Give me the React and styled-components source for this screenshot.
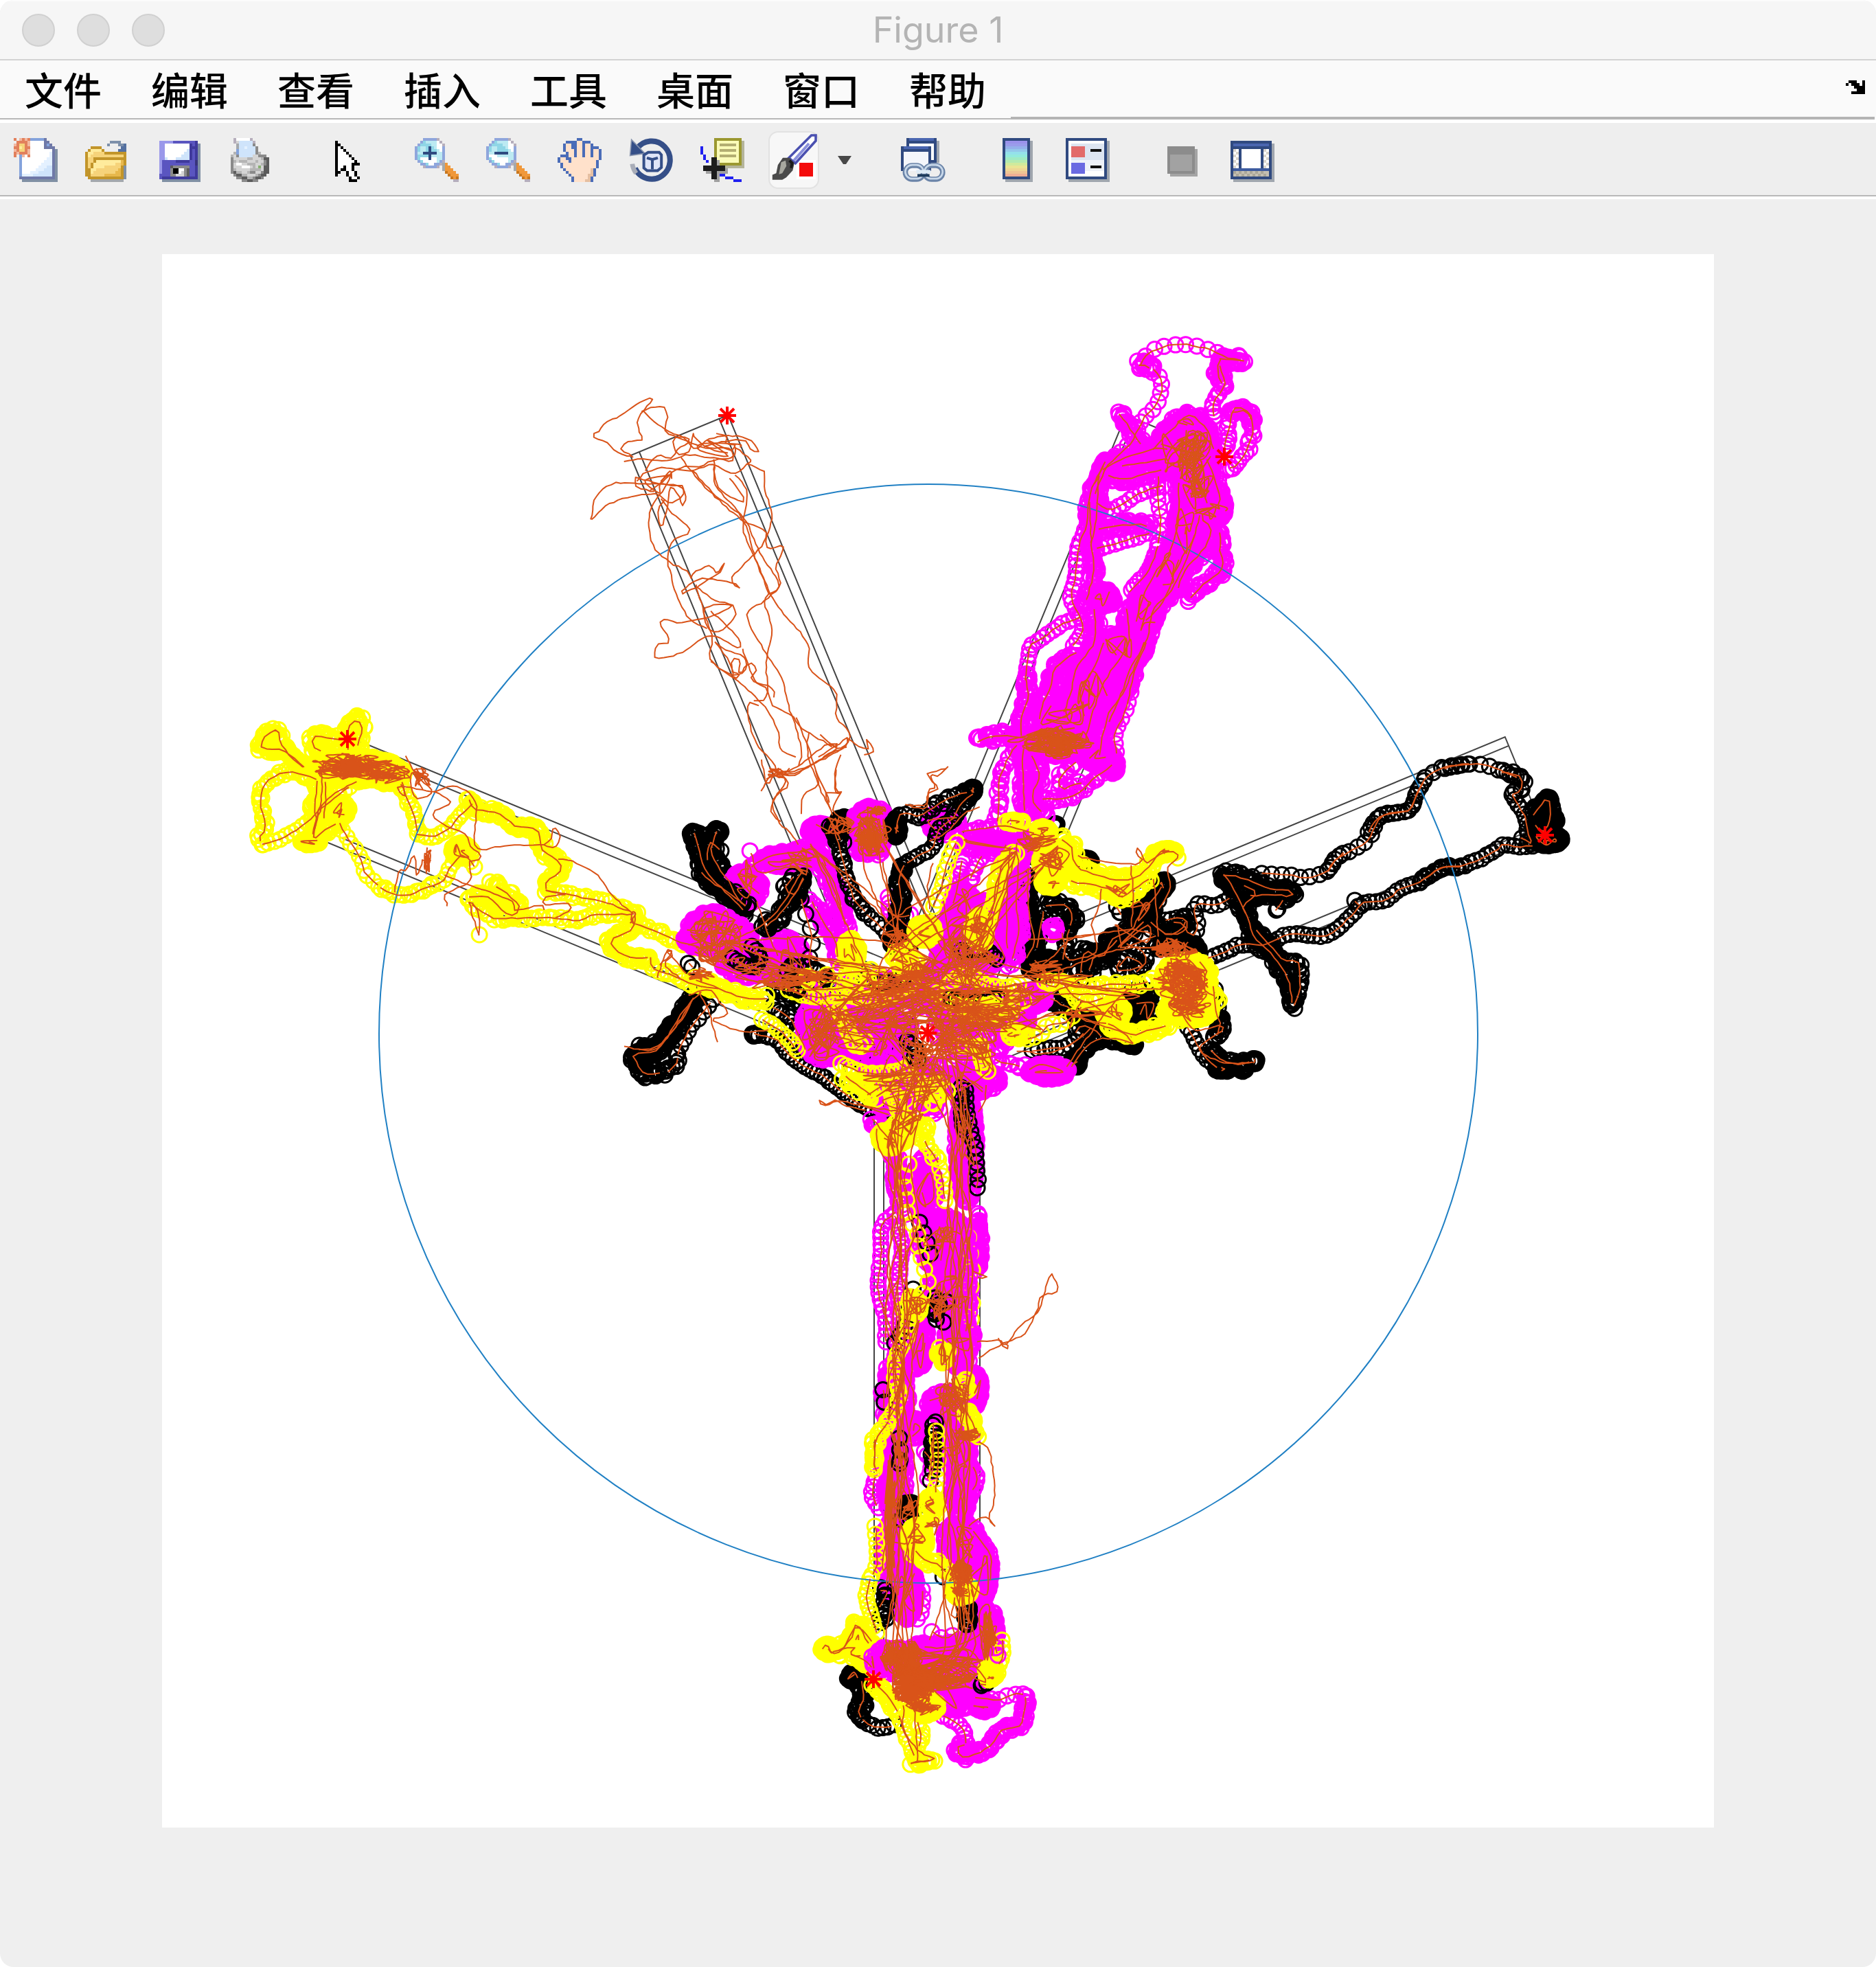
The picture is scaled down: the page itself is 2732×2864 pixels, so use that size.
import React from "react";
import styled, { createGlobalStyle } from "styled-components";

const GlobalStyle = createGlobalStyle`
  * { box-sizing: border-box; }
  html, body { margin: 0; background: #ffffff; }
  button { border: 0; padding: 0; margin: 0; background: none; font: inherit; color: inherit; }
`;

/* ---------- window chrome ---------- */

const Window = styled.div`
  display: flex;
  flex-direction: column;
  min-height: 100vh;
  overflow: hidden;
  border-radius: 20px;
  background: #efefef;
  font-family: "Inter", "Noto Sans CJK SC", sans-serif;
`;

const TitleBar = styled.header`
  display: grid;
  grid-template-columns: 1fr auto 1fr;
  align-items: center;
  height: 88px;
  padding: 0 32px;
  background: #f6f6f6;
  border-top: 2px solid #fcfcfc;
  border-bottom: 2px solid #d3d3d3;
`;

const Lights = styled.div`
  display: flex;
  gap: 32px;
`;

const Light = styled.button`
  width: 48px;
  height: 48px;
  border: 2px solid #d0d0d0;
  border-radius: 50%;
  background: #dedede;
`;

const Title = styled.h1`
  margin: 0;
  color: #b4b4b4;
  font-size: 52px;
  font-weight: 400;
  line-height: 60px;
`;

const MenuBar = styled.nav`
  display: flex;
  height: 86px;
  background: #fafafa;
`;

const Menus = styled.div`
  display: flex;
  border-bottom: 2px solid #b8b8b8;
`;

const MenuButton = styled.button`
  width: 184px;
  padding-bottom: 2px;
  color: #000000;
  font-family: "Noto Sans CJK SC", sans-serif;
  font-size: 56px;
  font-weight: 500;
  line-height: 80px;
`;

const MenuRest = styled.div`
  display: flex;
  flex: 1;
  align-items: center;
  justify-content: flex-end;
  margin-right: 2px;
  padding-right: 14px;
  border-bottom: 4px solid #b4b4b4;
`;

const ToolBar = styled.div`
  display: flex;
  align-items: center;
  gap: 72px;
  height: 116px;
  padding-left: 20px;
  background: #eeeeee;
  border-top: 5px solid #ffffff;
  border-bottom: 4px solid #ffffff;
  box-shadow: inset 0 -2px 0 #b8b8b8;
`;

const ToolGroup = styled.div`
  display: flex;
  align-items: center;
  gap: 40px;
`;

const ToolButton = styled.button`
  display: flex;
  align-items: center;
  justify-content: center;
  width: ${(p) => (p.$on ? 74 : 64)}px;
  height: ${(p) => (p.$on ? 84 : 64)}px;
  margin: ${(p) => (p.$on ? "0 -5px" : "0")};
  border: ${(p) => (p.$on ? "2px solid #e2e2e2" : "0")};
  border-radius: ${(p) => (p.$on ? 14 : 0)}px;
  background: ${(p) => (p.$on ? "#f7f7f7" : "transparent")};
`;

const BrushTool = styled.div`
  display: flex;
  align-items: center;
  gap: 32px;
`;

const DropButton = styled.button`
  display: flex;
  width: 20px;
  justify-content: center;
`;

const Canvas = styled.main`
  flex: 1;
  padding: 80px 236px 202px;
`;

const Plot = styled.svg`
  display: block;
  width: 100%;
  height: auto;
  background: #ffffff;
`;

/* ---------- toolbar icons on a 16 x 16 grid ---------- */

const PALETTE = {
  k: "#000000", w: "#ffffff", l: "#e4f1ff", L: "#cfe4fb", b: "#84a3dc", n: "#6f79a8", g: "#8090a4",
  o: "#e2805c", p: "#f2b8a0", y: "#f6d37a", Y: "#ffeb9c", d: "#c2952a", D: "#e8b84c", a: "#7d90aa",
  A: "#5470a0", s: "#a4a8ac", v: "#5a55c0", V: "#9a98ea", u: "#3f3a9c", U: "#38347c", h: "#4a6cb8",
  f: "#ffe1cb", F: "#e5bfa2", c: "#8fa6dc", C: "#bceaf2", e: "#8fd6e6", m: "#2f4a80", r: "#f0983a",
  R: "#c87820", t: "#b6aebc", x: "#8a8a8a", X: "#5c5c5c", z: "#d4d4d4", q: "#b4b4b4", G: "#86b070",
};

const LENS = (plus) => [
  "...ccccct.......",
  "..ceCCCCwt......",
  ".ceeeeCCwwt.....",
  plus ? "ceCCemeCwwc....." : "ceCCeeeCwwc.....",
  plus ? "ceCCemeeCwc....." : "ceCCeeeeCwc.....",
  "cCCmmmmmCCc.....",
  plus ? "ceeeemCCCCc....." : "cwwwCCCCCCc.....",
  plus ? "cewwwmwwCCc....." : "cewwwwwwCCc.....",
  ".cewwwwwCct.....",
  "..ccewwcctsr....",
  "...tcccct.srr...",
  "..........srrr..",
  "...........Rrrr.",
  "............Rrrr",
  ".............RrR",
  "..............tt",
];

const PIXELS = {
  newFigure: [
    "o.popobbbbbn....", ".oooopwwwwwnn...", "poyyopwwwwwnbn..", "ooYyoowwwwwnnnn.",
    "poyyopwwwwwwwwng", "opooopwwwwwwwlng", "o.bpwowwwwwwwlng", "..bwwwwwwwwwllng",
    "..bwwwwwwwwlllng", "..bwwwwwwwllllng", "..bwwwwwwlllLLng", "..bwwwwwlllLLLng",
    "..bwwwlllLLLLLng", "..bllllLLLLLLLng", "..nnnnnnnnnnnnng", "...ggggggggggggg",
  ],
  open: [
    "................", ".........aaaa...", "........a...aaA.", "..dddd.......AA.",
    ".dYYYYd.....AAA.", "dYYyyyydddddddd.", "dYyyyyyyyyyyyyd.", "dyydddddddddddd.",
    "dyydYYYYYYYYYDd.", "dydYYYYYYYYyyDd.", "dydYYYYyyyyyydg.", "ddYYyyyyyyyyDdg.",
    "ddYyyyyyyyyDDdg.", "ddyyyyyDDDDDDdg.", ".dddddddddddddg.", "..ssssssssssss..",
  ],
  save: [
    "................", ".VVVVVvvvvvvvvu.", ".VVwwwwwwwwwuvug", ".VVwwwwwwwwwuuug",
    ".VVwwwwwwwwLuvug", ".VVwwwwwwwLLuvug", ".VVwwwwwwLLLuvug", ".VVLwwwLLLLLuvug",
    ".VvvvvvuuuuuvvUg", ".VvvvvvvvvvvvvUg", ".VvvvXxxxxxxvvug", ".VvvvxkkwwxXvvug",
    ".VvvvxkkwzxXvvug", ".vvvvxxzzzxXvvug", ".vuuuuuuuuuuuuug", "..gggggggggggggg",
  ],
  print: [
    "..twwwwwt.......", "..tzLLLLLt......", "...sLLLLLx......", "...sLLlLLLx.....",
    "...bLLLLLLx.....", "..qbLLLLLLxq....", ".qzxLLLLLzzxxx..", ".xzzzzzqqzzzqXX.",
    ".xqzqqqzzzqzzxX.", ".xzwwzzqqqzzqxX.", ".xzzzwwwzqzGzXX.", ".xqzzzzzqqqqzXX.",
    ".xXqqzzqxxzzxXX.", "..xXXqqzzzqxXX..", "...xxXXqqxXXx...", ".....xxXXxx.....",
  ],
  pointer: [
    "................", ".....k..........", ".....kk.........", ".....kwk........",
    ".....kwwk.......", ".....kwwwk......", ".....kwwwwk.....", ".....kwwwwwk....",
    ".....kwwwwwwk...", ".....kwwwwwkkk..", ".....kwwkwwk....", ".....kwkkwwk....",
    ".....kk..kwwk...", ".....k...kwwk...", "..........kwwk..", "..........kkk...",
  ],
  zoomIn: LENS(true),
  zoomOut: LENS(false),
  pan: [
    ".......hh.......", "...hhhhffhhh....", "..hffhhffhffh...", "..hffhhffhffhhh.",
    "..hfffhffhffhffh", "...hffhffhffhffh", ".hhhffhffhffhffh", "hffhhffffffffffh",
    "hfffhfffffffffh.", ".hffffffffffffh.", ".hffffffffffffh.", "..hfffffffffFh..",
    "...hffffffffFh..", "....hffffffFFh..", ".....hfffffFh...", ".....hffffFFh...",
  ],
  undock: [".kkk..k", "k.kkk.k", "...kkkk", "....kkk", "..kkkkk"],
};

function PixelIcon({ name }) {
  const rows = PIXELS[name];
  const w = rows[0].length;
  const cells = [];
  rows.forEach((row, y) => {
    for (let x = 0; x < row.length; ) {
      let e = x + 1;
      while (e < row.length && row[e] === row[x]) e++;
      const fill = PALETTE[row[x]];
      if (fill) cells.push(<rect key={`${x}-${y}`} x={x} y={y} width={e - x} height="1" fill={fill} />);
      x = e;
    }
  });
  return (
    <svg width={w * 4} height={rows.length * 4} viewBox={`0 0 ${w} ${rows.length}`} shapeRendering="crispEdges" aria-hidden="true">
      {cells}
    </svg>
  );
}

/* each row: x, y, width, height, fill */
function RectIcon({ rects, children }) {
  return (
    <svg width="64" height="64" viewBox="0 0 16 16" overflow="visible" aria-hidden="true">
      {rects.map(([x, y, w, h, fill], i) => (
        <rect key={i} x={x} y={y} width={w} height={h} fill={fill} shapeRendering="crispEdges" />
      ))}
      {children}
    </svg>
  );
}

const RotateIcon = () => (
  <RectIcon rects={[]}>
    <path d="M2.8 4A6.7 6.9 0 1 1 2.2 11" fill="none" stroke="#354f88" strokeWidth="2" />
    <path d="M1.2 9.4a7 7 0 0 0 1.4 3.4" fill="none" stroke="#a9adb8" strokeWidth="1.7" />
    <path d="M.9 .6L5.8 5.6L.4 6.4z" fill="#354f88" stroke="#8793ad" strokeWidth=".4" />
    <path d="M5.4 6.2L7 5.2h4l.8.9v4.6l-1.4 1.2H6.6l-1.2-1z" fill="#dfe5f8" stroke="#354f88" strokeWidth="1" />
    <path d="M6.5 7.2l2 .6 2-.6M8.5 7.8v3.6" fill="none" stroke="#354f88" strokeWidth="1" />
  </RectIcon>
);

const TIP = [
  [6, 1, 10, 10, "#b4b49a"], [5, 0, 10, 10, "#9b9830"], [6, 1, 8, 8, "#fafbb8"],
  [7, 2, 6, 1, "#b3ae72"], [7, 4, 6, 1, "#b3ae72"], [7, 6, 6, 1, "#b3ae72"],
  [5, 8, 2, 8, "#a0a0a0"], [2, 11, 8, 2, "#a0a0a0"],
  [4, 7, 2, 8, "#1c1c1c"], [1, 10, 8, 2, "#1c1c1c"],
  [0, 3, 1, 3, "#2020f0"], [1, 6, 1, 2, "#2020f0"], [2, 8, 1, 1, "#2020f0"],
  [7, 13, 2, 1, "#2020f0"], [9, 14, 3, 1, "#2020f0"], [12, 15, 3, 1, "#2020f0"],
];

const BrushIcon = () => (
  <RectIcon rects={[[9, 8, 7, 7, "#ffffff"], [10, 9, 5, 5, "#f40c0c"]]}>
    <path d="M14.4-1H16V1L8.6 9.2L6.2 7.2z" fill="#ffffff" stroke="#4a50b0" strokeWidth=".9" />
    <path d="M13.5 2L8 8.2" stroke="#8a90dc" strokeWidth="1" />
    <path d="M4 7.2h2.4l1.8 2-.6 2.6-2.4 2.6-1.4.8H.2v-1.8l1.4-.6.6-3z" fill="#4a4a4a" />
    <path d="M3.4 8.8l1.6-.6.3 2-1.5 2.6-1.2.4z" fill="#a8a8a0" />
    <path d="M6.4 8.2l1 .9-.4 1.8" fill="none" stroke="#1c1c1c" strokeWidth="1" />
  </RectIcon>
);

const LinkIcon = () => (
  <RectIcon
    rects={[
      [3, 1, 11, 8, "#a0a6ae"], [2, 0, 11, 9, "#304a80"], [3, 0, 9, 1, "#4a66b0"], [3, 2, 9, 6, "#ffffff"],
      [0, 3, 11, 9, "#304a80"], [1, 3, 9, 1, "#4a66b0"], [1, 5, 9, 7, "#f4f6fb"],
    ]}
  >
    <rect x="1.6" y="10" width="6.6" height="5" rx="2.5" fill="none" stroke="#6b84a8" strokeWidth="1.9" />
    <rect x="8.6" y="10" width="6.6" height="5" rx="2.5" fill="none" stroke="#6b84a8" strokeWidth="1.9" />
    <rect x="1.6" y="9.8" width="6.6" height="5" rx="2.5" fill="none" stroke="#c8d8ea" strokeWidth=".7" />
    <rect x="8.6" y="9.8" width="6.6" height="5" rx="2.5" fill="none" stroke="#c8d8ea" strokeWidth=".7" />
    <path d="M5.6 12.2h5.2" stroke="#dceaf6" strokeWidth="1.2" />
    <path d="M6 13.6h4.4" stroke="#1c3a5c" strokeWidth="1" />
  </RectIcon>
);

const BAR_COLOURS = ["#9a92ea", "#9a9cea", "#94b0ea", "#94c8ea", "#94e0ea", "#94eadc", "#a0eac4", "#b4eab0", "#d0ea9c", "#eae494", "#eed694", "#eec494", "#eeae94"];
const COLORBAR = [
  [4, 1, 10, 15, "#a0a6ae"], [3, 0, 10, 15, "#304a80"],
  ...BAR_COLOURS.map((c, i) => [4, i + 1, 8, 1, c]),
];
const LEGEND = [
  [1, 1, 15, 15, "#a0a6ae"], [0, 0, 15, 15, "#304a80"], [1, 1, 13, 13, "#ffffff"], [2, 2, 12, 6, "#dde5f1"], [2, 8, 12, 4, "#eef2f9"],
  [2, 3, 5, 4, "#e26a6a"], [2, 9, 5, 4, "#6a6ae2"], [9, 4, 4, 1, "#101010"], [9, 10, 4, 1, "#101010"],
];
const HIDE = [[4, 4, 10, 10, "#a4a4a4"], [3, 3, 10, 10, "#8c8c8c"], [4, 6, 8, 6, "#a2a2a2"]];
const DOCK = [
  [1, 2, 15, 14, "#a0a6ae"], [0, 1, 15, 14, "#304a80"], [1, 2, 13, 1, "#4a66b0"], [1, 4, 13, 7, "#ffffff"],
  ...[0, 1, 2, 3, 4, 5, 6].flatMap((i) => [[1 + (i % 2), 4 + i, 1, 1, "#d8d4cc"], [12 + (i % 2), 4 + i, 1, 1, "#d8d4cc"]]),
  [3, 4, 9, 7, "#304a80"], [4, 4, 7, 7, "#ffffff"], [1, 11, 13, 1, "#3e5ca0"], [1, 12, 13, 2, "#c4bfb2"],
  ...[0, 1, 2, 3, 4, 5].flatMap((i) => [[1 + i * 2, 12, 1, 1, "#aaa698"], [2 + i * 2, 13, 1, 1, "#aaa698"]]),
];

/* ---------- plotted data ---------- */

/* local survey frames: origin x, origin y, units per pixel in x and in y */
const FRAMES = {
  A: [340, 1000, 2.24, 2.613],
  B: [820, 540, 2.8, 2.376],
  C: [1380, 460, 3, 2.063],
  D: [880, 1120, 2.613, 2.8],
  E: [1380, 1120, 3, 3],
  F: [1700, 1040, 2.529, 2.8],
  G: [1160, 1580, 3, 2.8],
  H: [1160, 2080, 3, 3.015],
};
const COLOURS = { k: "#000000", y: "#ffff00", m: "#ff00ff" };

/* "frame colour spacing | x y x y ..." is a walked track;
   "frame colour @ cx cy rx ry markers turns" is a cluster where the animal lingered. */
const SERIES = `
F k 14 | 350 650 440 655 520 665 590 640 620 590 690 550 740 510 770 440 810 405 890 390 920 320 950 260 1010 220 1090 205 1160 205 1230 230 1300 260
F k 7 | 590 640 620 590 650 565
F k 8 | 740 480 770 430 810 405 890 390 920 320 950 260
F k 9 | 1020 220 1090 205 1130 205
F k 5 | 1230 235 1300 255 1305 300 1270 330
F k 8 | 1270 330 1300 380 1320 430 1330 490 1345 530 1300 500
F k 4 | 1350 410 1400 345 1410 430 1380 480 1350 440
F k @ 1395 440 40 50 120 2
F k @ 1403 345 8 12 30 2
F k @ 1400 510 55 26 140 8
F k 9 | 1345 535 1290 540 1240 530 1210 555 1150 590 1080 620 1010 625 960 660 920 690 860 710 800 760 720 770 680 820 630 870 570 905 460 895 380 930 350 940 270 940 200 975 140 1000
F k 6 | 1080 620 1010 625 960 660 920 690
F k 12 | 690 760 720 790
F k 3 | 205 655 250 660 330 690 380 710 455 720 450 740 380 735 300 740
F k 3 | 205 655 240 700 270 770 300 840 320 910 370 960 420 1030 450 1100 462 1190
F k 5 | 330 880 390 960 430 1000 480 1010 490 1080 480 1150 460 1200
F k 5 | 280 700 330 730 280 780 300 830
F k 12 | 400 800 395 805 440 740
F k 10 | 230 750 180 780 120 770 100 800 110 860 90 900 50 850 20 850
D k 3 | 370 910 320 960 270 1040 230 1110 190 1150 115 1160 125 1200 145 1235 180 1245 230 1235
D k 5 | 240 1235 275 1200 275 1160
D k 3 | 340 930 300 1010 250 1080 200 1130 130 1145
D k 12 | 280 1160 300 1110 330 1050 370 1000 400 960 420 930
D k 3 | 345 262 355 310 370 370 390 420 440 480 490 530 540 590
D k 3 | 430 255 405 330 435 400 475 460 510 530 540 560
D k @ 340 262 14 10 50 2
D k @ 430 255 16 12 34 2
D k 5 | 440 330 400 300 390 380
D k @ 920 215 40 22 100 6
D k @ 1130 700 45 40 130 10
D k @ 570 1080 10 10 20 2
D k 7 | 570 1080 650 1100 700 1160 760 1210 830 1250 900 1310 980 1370 1060 1400 1100 1420
D k 6 | 640 970 700 1010 740 1080 770 1160
D k 7 | 1370 1300 1370 1400 1390 1480 1400 1560
D k 8 | 1050 900 1120 860 1200 840
D k @ 1000 1100 200 120 120 2
D k @ 800 900 160 60 90 2
E k @ 110 90 12 12 40 3
E k @ 470 245 12 8 20 1
E k @ 605 400 25 15 40 2
E k 3 | 430 600 480 590 530 605 545 650 530 700
E k 5 | 530 700 515 780 500 840
E k 4 | 355 430 350 550 360 650 380 750 340 830
E k 5 | 420 620 400 720 390 800
E k @ 430 860 80 40 200 14
E k 3 | 580 890 600 800 680 820 720 740 800 700 850 620 920 540 940 490
E k 3 | 620 880 640 820 700 790 750 740
E k @ 850 620 60 50 160 8
E k @ 940 505 22 25 60 3
E k 3 | 890 670 960 720 1020 700 1040 650
E k 3 | 900 780 1000 750 1080 800
E k @ 1040 790 60 40 120 20
E k 10 | 740 600 760 640 740 600
E k 9 | 750 860 790 820 850 860 740 880 760 830
E k 7 | 780 760 840 790 870 830 820 890
E k 9 | 950 660 1030 650 1050 690 1000 720 940 720
E k 4 | 1160 950 1170 1050 1190 1120 1170 1180
E k 9 | 1050 1130 1090 1200 1120 1250 1180 1310
E k 3 | 1150 1230 1200 1270 1270 1290 1340 1275
E k @ 1340 1275 16 12 40 3
E k @ 1200 1310 34 12 60 4
E k @ 1290 1310 14 10 20 2
E k 9 | 370 1230 440 1220 520 1210 600 1150
E k 4 | 540 1300 600 1220 660 1180 740 1180 810 1200
E k @ 560 1280 24 24 60 3
E k @ 805 1200 20 16 30 2
E k 3 | 450 1000 540 1050 620 1100 700 1110
E k 5 | 560 1150 600 1120 680 1170
E k @ 840 1030 60 80 100 5
A y 4 | 230 305 165 245 95 235 92 208 115 175 145 165 155 220 200 280 235 310
A y 5 | 270 350 180 325 120 350 92 400 90 460 105 520 95 560 80 575 95 595
A y 9 | 95 600 160 575 230 525 280 470 390 370
A y 3 | 375 240 375 165 400 125 418 160 400 240
A y 3 | 345 200 265 190 265 230 300 250
A y @ 390 310 145 52 420 60
A y @ 500 330 60 42 140 16
A y @ 345 470 34 34 100 8
A y @ 250 590 34 12 70 5
A y 3 | 275 360 265 460 270 510 260 580 300 540 345 520
A y 4 | 300 360 300 450 290 520
A y 11 | 345 520 380 590 415 650 430 710 480 765
A y 6 | 480 765 540 795 600 780 650 755
A y 9 | 650 755 690 730 710 680 750 640 790 690
A y @ 745 625 34 32 90 8
A y 6 | 545 370 570 430 590 500 600 560
A y 7 | 600 560 650 570 700 540 740 490 785 440
A y 4 | 770 430 790 465 870 485 920 530 990 545 1010 620 1065 670 1060 710 1020 740 1020 775
A y 6 | 1020 775 1130 800 1200 815 1260 840 1310 860
A y 4 | 770 800 830 800 900 870 930 830 860 760 840 750
A y 6 | 780 830 850 880 930 880 1030 880 1130 890 1170 870 1310 865
A y 400 | 800 945 770 820
A y 4 | 1310 860 1300 920 1230 970 1290 1030 1360 1030
A y 6 | 1360 1030 1370 1070 1440 1100 1520 1140 1600 1150
A y 5 | 1310 900 1390 935 1450 970 1520 990
C m 16 | 840 150 880 110 960 90 1020 85 1080 90 1160 105 1220 125 1300 135
C m 3 | 1190 130 1240 130 1300 135
C m 3 | 835 150 850 145 900 160
C m 13 | 900 160 935 200 930 240 895 280 850 315 800 380 700 450 640 540
C m 6 | 1190 150 1210 210 1160 260 1165 310
C m 4 | 1190 130 1180 170 1210 210
C m 4 | 750 295 800 340 860 400
C m 6 | 1210 400 1230 330 1250 280 1310 285 1335 330 1310 400 1260 450 1210 460
C m 4 | 1240 290 1300 285 1330 320
C m @ 1040 400 120 90 420 30
C m @ 1040 320 70 20 120 6
C m @ 1090 520 80 80 300 20
C m @ 1180 580 40 30 110 6
C m 3 | 1130 430 1170 500 1190 560 1110 600 1150 640 1120 700 1040 760 1000 830
C m 3 | 1010 500 1010 560 1000 650 960 720 900 780 850 850 820 930
C m 3 | 1100 600 1060 700 980 820 900 880 870 970 800 1060 760 1130 700 1230
C m 3 | 780 880 790 980 700 1080 640 1180 600 1280
C m 3 | 860 980 800 1080 760 1140 700 1200 660 1330
C m 3 | 640 880 640 980 560 1060 540 1130 500 1200
C m 3 | 900 400 980 340 1060 300 1130 340 1160 400
C m 3 | 1080 660 1000 760 940 860 860 920
C m 3 | 680 980 640 1060 580 1130 600 1210
C m 3 | 690 440 660 480 630 520
C m 3 | 680 460 760 430 900 400 960 400
C m 3 | 700 480 780 490 890 470 960 460
C m 3 | 760 450 860 440 960 430
C m 9 | 680 450 620 540 610 620 570 700 560 780 540 850 590 920 580 960 540 1000
C m 9 | 650 560 720 580 850 530 950 510
C m 3 | 660 640 750 630 850 625 890 640
C m 9 | 650 700 750 680 890 650
C m 3 | 620 560 630 700 640 760 600 870
C m 4 | 660 480 650 600 620 700
C m 12 | 920 480 920 560 930 620 920 690
C m 7 | 920 690 880 760 820 810 790 830
C m 4 | 1190 650 1190 700 1200 760 1130 800 1060 850
C m @ 1040 650 60 80 220 10
C m @ 960 770 70 60 240 10
C m @ 860 890 60 60 200 10
C m @ 680 850 50 30 120 6
C m @ 740 1010 80 60 180 12
C m @ 620 1110 90 80 320 14
C m @ 520 1200 130 50 300 16
C m @ 480 1280 170 44 380 50
C m 3 | 130 1280 190 1265 250 1260 350 1270
C m @ 725 1350 20 30 60 2
C m @ 660 1320 60 30 120 4
C m 9 | 580 905 500 925 430 960 365 990 350 1040 340 1100
C m 4 | 340 1080 350 1150 320 1210 320 1270
C m 4 | 560 1010 470 1060 450 1120 420 1160 400 1220
C m 13 | 870 980 830 1040 805 1100 790 1160 755 1220 730 1260 740 1320
C m 6 | 300 1290 250 1350 225 1400 225 1460 215 1520
C m 3 | 330 1300 330 1400 340 1500
C m 3 | 370 1320 400 1380 370 1450 430 1500
C m 5 | 720 1350 640 1390 580 1430 500 1450 400 1450
C m 6 | 560 1340 490 1390 500 1420 590 1400
E m 5 | 60 270 160 260 260 250 380 280
E m 6 | 60 400 50 480 40 540 20 600
E m 7 | 150 380 110 450 100 500
E m 3 | 300 320 310 450 300 600 310 700 280 850
E m 4 | 270 350 260 500 260 650 260 800
E m @ 370 330 50 40 120 10
E m @ 180 330 120 40 100 10
E m @ 150 720 140 150 330 20
E m @ 370 1000 60 40 170 10
E m @ 280 1090 80 60 130 12
E m @ 100 970 130 50 200 14
E m @ 60 600 60 90 130 8
E m 6 | 210 1270 280 1290 340 1300
E m @ 440 1320 90 36 240 6
E m @ 460 700 20 24 12 2
D m @ 410 660 95 80 460 20
D m @ 360 690 60 40 120 10
D m @ 500 690 60 60 120 10
D m @ 540 480 60 70 190 10
D m 200 | 555 335 560 350
D m 4 | 560 400 620 360 720 340 800 330 850 400
D m @ 700 370 100 30 110 8
D m @ 820 250 45 30 140 3
D m @ 1010 190 60 40 160 10
D m @ 1010 300 60 60 100 20
D m 3 | 800 330 850 430 890 540 920 640
D m 5 | 830 380 880 480 910 600
D m 4 | 790 540 820 600 880 700 890 780
D m 6 | 560 720 640 820 720 860 800 900
D m @ 680 760 80 80 120 10
D m @ 560 800 120 50 130 14
D m @ 840 1060 90 130 360 30
D m @ 1050 900 150 60 200 16
D m @ 1000 1060 170 130 220 20
D m @ 1150 1270 190 80 240 16
D m @ 1350 720 90 150 300 16
D m @ 1290 220 60 50 60 4
D m 8 | 1080 520 1100 600 1180 590
D m @ 1400 1050 150 160 180 16
D m @ 1400 1270 110 50 140 8
D m @ 1300 900 150 100 160 16
G m 4 | 330 140 360 170 420 250 440 420
G m 9 | 430 520 370 580 370 700 355 800 360 860 390 950 390 1050
G m 8 | 430 530 460 650 450 760 440 850 450 950 430 1100 400 1220 390 1300
G m 5 | 450 300 440 430 470 520
G m @ 560 420 50 130 190 8
G m @ 740 250 50 240 340 8
G m @ 640 640 110 110 300 14
G m @ 670 850 100 110 220 14
G m @ 530 1060 50 100 140 8
G m @ 710 1050 70 110 170 8
G m @ 780 1240 28 70 160 4
G m @ 660 1300 90 60 170 10
G m @ 430 1270 60 150 160 8
G m @ 700 1450 70 110 240 14
G m @ 520 1400 30 50 40 4
G m @ 790 640 20 120 60 2
G m @ 500 60 140 90 120 8
H m @ 430 200 50 200 200 12
H m @ 720 200 50 180 220 10
H m 8 | 345 210 330 290 360 350
H m 7 | 770 170 790 230 760 290
H m @ 430 560 60 180 300 12
H m @ 480 720 50 120 240 8
H m @ 720 500 80 100 220 10
H m 8 | 770 450 820 510 850 570 845 680
H m @ 800 640 50 130 240 8
H m @ 830 900 50 120 260 20
H m 11 | 550 710 550 790 530 840
H m 17 | 590 890 650 920 720 880
H m 3 | 560 960 660 960 760 930 830 880
H m @ 600 1010 240 70 560 20
H m @ 400 1020 60 60 120 8
H m @ 680 1150 130 90 300 10
H m @ 820 1220 40 24 80 4
H m 12 | 780 1180 880 1190 950 1165 1000 1170
H m 4 | 1000 1180 1000 1230 970 1310 900 1320 850 1390 780 1430 720 1440 705 1400 740 1385
H m 7 | 740 1380 720 1310 660 1270 620 1260
H m 7 | 560 100 590 150 570 230
D y 7 | 700 900 800 930 900 920 1050 940 1180 870
D y 6 | 880 960 920 1050 960 1130 1000 1100
D y 8 | 1250 900 1330 950 1450 960 1560 1000
D y 8 | 1000 1330 1080 1290 1120 1400
D y 7 | 900 1200 1000 1240 1120 1230 1200 1180
E y 8 | 0 940 80 900 200 950 320 940
E y 9 | 20 1010 120 1050 240 1040 340 1010
D k 7 | 1360 740 1450 740 1500 780
D k 7 | 1320 930 1400 950 1500 930
D k 8 | 980 840 1050 870 1150 850
D k @ 750 850 90 60 16 2
D k 4 | 370 420 410 460 470 500 510 530 540 560
D k 3 | 755 440 730 500 690 560 640 620 600 650
D k 5 | 720 440 690 480 720 510 760 440
D k 22 | 750 530 770 600 790 680 785 750 785 810 850 850 900 850
D k 7 | 490 770 540 800 580 800 590 760 560 720
D k 6 | 870 230 890 300 910 380 930 460 950 530 1000 590
D k 10 | 1000 590 1050 640 1100 700
D k 4 | 860 230 890 270 900 300
D k 6 | 1110 260 1130 180 1200 190 1260 150 1330 110 1400 90
D k @ 1400 90 10 14 40 3
D k @ 1110 240 16 40 60 4
D k 5 | 1400 100 1350 150 1330 200
D k 8 | 1330 200 1270 250 1250 320 1200 350 1140 390
D k 4 | 1140 390 1120 450 1130 520 1120 600 1110 680
D k 8 | 1150 1110 1190 1140 1180 1180 1210 1190
D k 8 | 320 790 350 820
D m @ 1000 210 40 30 30 2
G k 12 | 740 20 750 150 780 250 790 330 790 400 780 440
G k 9 | 720 10 720 120 740 200
G k 16 | 540 560 560 620 590 700
G k 14 | 510 830 480 960 410 1080
G k @ 620 900 40 80 10 2
G k 5 | 600 1380 600 1450 590 1540
G k 18 | 450 1440 450 1500 450 1550
G k 18 | 380 1240 380 1320
H k @ 495 345 28 26 80 10
H k 6 | 460 400 500 390
H k @ 250 1090 30 22 110 4
H k 3 | 285 1110 290 1190 270 1240 290 1280
H k 8 | 290 1280 340 1310 380 1310 440 1300
H k 4 | 740 780 745 830 755 860
H k 14 | 600 20 590 80 600 150 585 230
H k 16 | 450 90 450 150
H k @ 380 770 20 100 18 3
H k 5 | 800 1125 830 1125
H k 12 | 640 650 650 680
D y 3 | 350 860 430 890 520 930 620 935
D y 7 | 600 1020 650 1050 700 1100 740 1150
D y 3 | 920 1250 980 1300 1030 1340
D y @ 940 740 30 50 90 6
D y @ 1220 660 40 40 100 6
D y @ 1100 1500 60 36 150 6
D y @ 900 850 160 50 30 6
D y @ 1140 780 50 50 40 6
D y 11 | 1340 300 1300 400 1280 500 1240 580
D y 6 | 1550 340 1510 400 1490 520 1460 600
D y @ 1430 690 22 26 50 8
D y 10 | 1350 1130 1430 1140 1440 1200
D y 12 | 1110 1330 1130 1400
E y @ 470 400 70 70 300 14
E y @ 450 490 40 30 110 5
E y @ 290 230 40 10 30 4
E y @ 420 270 30 20 60 6
E y 3 | 500 310 540 340 560 420 640 460 720 480 800 480 880 430 920 370 960 340
E y @ 960 360 40 14 60 6
E y 300 | 1005 385 960 350
E y 3 | 540 490 620 505 700 520 760 560 820 520 880 480
E y 8 | 300 370 250 420 210 500 200 600 160 700
E y @ 140 690 36 56 80 16
E y @ 1040 920 110 90 420 40
E y @ 1050 1050 110 50 320 24
E y 3 | 1100 840 1130 880 1120 960 1180 1000
E y 200 | 1188 1010 1160 990
E y @ 725 1060 48 48 150 8
E y 5 | 420 920 520 940 620 950 720 940 820 940 900 920
E y 5 | 500 930 560 1000 620 1020 680 1000
E y 4 | 700 1110 800 1160 880 1140 960 1120
E y 11 | 350 1180 400 1160 440 1120 500 1110 560 1070
E y 5 | 140 1200 150 1260 170 1320
E y @ 150 1050 140 30 34 10
E y @ 300 1160 40 20 20 6
G y @ 410 230 45 28 110 5
G y @ 490 180 90 50 40 8
G y 18 | 490 320 470 380 480 440 480 490 490 540 530 600 530 660 560 760 570 820 520 880
G y 9 | 520 880 500 930 480 1030 440 1100 430 1200 450 1270 400 1370
G y @ 510 900 50 40 24 6
G y 5 | 400 1370 350 1450 340 1568
G y 5 | 560 230 600 290 625 320
G y 12 | 625 340 640 400 650 480
G y 24 | 750 620 765 720 765 820 765 920 755 1010
G m 5 | 740 600 750 720 750 820 748 920 738 1010
G y @ 640 1090 26 50 20 12
G y @ 740 1230 16 30 12 4
G y 4 | 740 1330 780 1400 790 1430
G y @ 560 30 100 60 24 4
H y 6 | 340 50 340 150 350 190
H y @ 590 340 30 50 50 10
H y @ 530 480 46 62 170 10
H y 4 | 520 540 570 580 620 600 660 640
H y @ 720 710 44 36 70 30
H y 12 | 345 430 350 520 350 600 320 660
H y 8 | 320 660 305 740 325 820 350 900
H y @ 135 970 28 24 80 3
H y 3 | 160 980 200 970 240 920 265 860 300 920 330 960
H y 3 | 240 990 300 1020 330 1050
H y @ 270 930 34 50 80 3
H y 4 | 340 1110 400 1180 440 1240
H y 7 | 450 1260 470 1330 500 1400 520 1450
H y 6 | 530 1290 545 1360 530 1420
H y @ 560 1220 60 40 150 8
H y 3 | 500 1470 540 1460 600 1455
H y @ 850 1070 30 36 60 4
H y 9 | 900 930 900 1000 880 1050
H y 14 | 610 10 620 100 610 250 600 300
H m 7 | 330 1000 340 1050 330 1020
H m @ 380 1010 40 50 60 4
H m 12 | 870 960 880 1010
`;

const SCRIBBLES = `
B | 320 140 370 125 410 125 425 160 420 210 500 240 560 260 690 290
B | 280 295 230 285 180 250 130 232 125 215 150 210 170 180 240 152 300 115 365 92 330 135 305 170 310 210 328 235 270 245 238 265 260 285 300 305
B | 330 140 370 175 430 210 500 235 540 270 600 235 700 225 770 245 800 280 770 275 740 240 650 245 560 265
B | 250 315 300 305 420 310 510 290 600 300 690 310 680 270 590 265 540 230 530 215 520 270 480 290 450 260 460 230 520 240 470 270 440 300 380 295 330 350
B | 625 215 670 225 660 250 700 260 690 300 610 310 560 330 480 335 420 370 380 400 340 420
B | 300 380 340 350 420 335 520 345 610 325 700 355 750 320 770 310 700 265
B | 115 515 135 435 200 390 300 390 400 390 480 400 500 440 485 465 470 430 440 400 430 450 400 540 390 480 420 440
B | 115 515 180 465 260 440 380 425 430 455 480 440 490 400 430 395 320 375 300 365 300 400 380 420
B | 400 380 440 355 420 400 360 470 350 540 370 610 430 660 500 690 530 730
B | 400 440 430 480 510 540 505 565 450 585 425 640 440 710 470 790 520 860 600 900
B | 480 300 520 345 600 420 720 510 830 575 690 715 725 755 690 735 560 720 480 770 540 750 640 695 655 665 625 700 600 675 530 700 520 720
B | 750 320 820 350 820 400 850 500 830 580 840 615 900 605 870 680 885 735 845 780 815 800 755 830 760 880 830 980 890 1060 920 1160 970 1300 960 1370
B | 620 330 625 400 740 510 790 610 880 740 820 790 850 890 830 1000 835 1100 860 1160 930 1190 980 1240 1100 1300
B | 700 360 750 420 735 550 780 640 845 770 900 840 1000 945 1005 1030 1110 1110 1115 1200 1160 1240 1165 1280 1120 1310
B | 530 345 620 430 730 510 780 640 845 780
B | 680 370 740 450 650 420 620 370 615 300
B | 540 745 620 795 690 810 700 850 640 900 590 890 580 820 690 810 600 850 480 870 430 860 395 870 435 935 385 950 380 995 480 975 600 915 720 960 700 910 600 830
B | 540 740 580 850 610 930 600 1000 690 1050 740 1040 740 990 650 960 610 930
B | 620 940 680 1010 700 1065 720 1045 690 1040 690 1000 720 1000 720 1050 760 1010 790 1030 770 1070 850 1095 860 1140
B | 600 1005 690 1060 800 1140 870 1230 890 1310 960 1340
B | 800 1160 760 1150 755 1200 790 1290 850 1350 880 1400
B | 730 960 780 1070 830 1100 820 1140 770 1140
B | 1050 1260 1110 1305 1080 1290 1000 1340 930 1380 850 1395 830 1420 800 1470
B | 830 1410 900 1390 960 1380 1040 1350 1110 1310 1160 1300 1100 1320 1000 1370 940 1400 860 1385
B | 850 1380 930 1395 1020 1360 1090 1330 1150 1300 1160 1270 1110 1300 1030 1340
B | 1160 1270 1190 1290 1240 1310 1240 1275 1265 1320 1210 1330
B | 1130 1330 1110 1390 1115 1450 1135 1460 1100 1460 1070 1465 1100 1540
B | 1000 1250 1000 1330 1050 1450 1100 1530
B | 950 1200 1000 1300 1030 1380 1090 1500
B | 810 1345 830 1430 860 1400 910 1420 860 1480 850 1530 900 1568
B | 1030 1380 1040 1430 980 1470 970 1540
B | 1568 1370 1530 1400 1495 1395 1520 1440 1490 1450 1480 1500 1400 1500
A | 560 265 600 340 650 400 590 420 580 330 620 340 640 380 590 300
A | 655 400 725 380 790 440 790 610 880 605 1020 595 1045 535 1065 570 1050 610 1010 600
A | 655 400 710 440 650 480 680 520 755 560 770 600 810 650 770 670 770 740 690 790 700 830 680 840
A | 690 715 760 750 900 810 920 850 1000 830 1015 855
A | 1020 775 1080 790 1020 800 1015 830 1090 825 1095 855 1040 880
A | 1060 655 1120 670 1190 720 1240 800 1310 870
A | 525 780 540 700 560 700 590 640 600 720 620 650 630 720
A | 1390 1060 1430 1010 1410 1000 1440 1040 1480 1100
A | 800 945 770 820 800 860 800 945
A | 660 400 540 380 560 420 550 350
A | 400 360 340 400 290 450 260 560 290 400 280 300
G | 790 1045 890 1040 910 1060 990 970 1050 930 1080 860 1110 770 1140 840 1070 860 1050 920 1000 1010 910 1050 850 1080 780 1120
G | 880 1030 910 1070 930 1068 900 1045
G | 300 105 200 80 180 60 130 80 100 60 100 75 130 85 180 65 300 85 460 110
G | 350 180 360 260 440 355
G | 830 0 820 70 780 120
G | 770 760 830 782 770 785
H | 800 60 845 110 865 300 840 390 865 430 820 385 750 430
H | 650 730 610 850 580 930
H | 690 760 675 820 710 825 695 790 690 740
H | 110 970 130 950 160 985 200 970 265 870 340 950
H | 200 970 255 960 230 990 290 1000
H | 500 1470 600 1450 540 1420 470 1320 470 1200
H | 530 1460 520 1300 510 1200
D | 430 1110 400 1000 360 900
D | 320 920 400 900 440 950 470 1000 410 1020 480 1055 560 1070 640 1060
D | 75 1130 180 1145 250 1080 330 950
D | 1300 0 1230 20 1270 80 1230 100 1220 160 1130 140
D | 650 0 700 60 640 130 670 220 700 250 750 320
D | 880 0 880 90 900 95 870 160 900 200
D | 1430 155 1370 180 1300 260 1220 300
D | 970 250 990 400 1030 520 1080 640
D | 1060 380 1080 480 1110 580 1120 680
D | 1250 380 1230 480 1240 580
D | 560 340 590 420 700 400 780 420
D | 580 540 620 660 660 760
D | 200 850 240 740 260 760 230 800 300 860
D | 350 730 480 700 640 600 760 400
D | 380 780 560 860 760 900 1000 880 1200 820
D | 420 760 600 820 800 900 900 1000 1100 1000
E | 570 380 660 400 800 415 850 400 820 360 840 350 870 410 950 360 1010 380 960 430 970 520 920 620
E | 670 520 660 600 630 680 640 720 530 740 340 740
E | 900 480 910 600 920 740
E | 800 420 810 560 800 700
E | 360 880 460 820 540 740 640 720 800 700 900 720
E | 400 890 520 870 640 820 800 780 960 790
E | 640 720 650 800 560 830 520 820 500 700
E | 380 900 560 950 800 960 1000 960
E | 1020 1060 1080 1140 1180 1120 1200 1140 1100 1220 1200 1280 1340 1280
E | 320 1140 480 1060 640 1110 760 1150 810 1200
E | 520 1300 620 1160 700 1050 800 950
E | 300 1230 440 1240 540 1200 640 1120
`;

/* orange knots: frame cx cy rx ry turns */
const KNOTS = `
A 380 300 120 50 60|A 390 305 45 32 70|A 500 330 90 40 30|A 610 345 30 50 24|A 635 660 14 55 30|A 1300 880 18 25 10
B 640 270 100 40 8|B 400 390 80 50 6|B 880 1385 50 24 16|B 1105 1300 16 14 8
C 480 1280 150 50 40|C 490 1290 60 40 50|C 1070 420 90 80 40|C 1090 500 40 60 24|C 1140 590 60 20 10|C 380 1260 150 24 14
D 900 230 60 50 24|D 1020 270 70 90 90|D 1040 170 40 20 30|D 420 660 110 90 26|D 420 740 90 60 34|D 830 1080 110 130 30
D 1200 820 80 60 40|D 1150 950 300 140 70|D 700 850 200 60 40|D 1300 1050 240 160 50|D 1150 1250 180 90 20|D 360 840 60 40 20
D 1110 690 50 50 20|D 1380 1150 120 200 20|D 750 380 90 60 16|D 560 420 60 60 14|D 1350 700 120 200 24
E 380 310 100 50 30|E 470 390 70 60 20|E 100 850 140 150 34|E 180 1080 180 60 50|E 300 980 110 50 30|E 960 780 70 50 50
E 1020 930 120 110 60|E 1060 1010 100 60 44|E 1030 880 90 50 34|E 750 530 80 40 10|E 840 730 120 80 10|E 420 900 110 60 14|E 600 1080 120 70 12
G 620 880 50 80 24|G 680 1280 80 80 40|G 740 1420 60 30 40|G 500 150 90 60 14|G 660 620 60 60 12|G 520 900 60 50 14
H 720 640 55 60 90|H 510 1120 100 100 260|H 430 1000 60 80 90|H 600 1100 120 60 70|H 500 1000 50 70 90|H 700 1080 140 90 40
H 550 1220 80 30 40|H 840 900 40 120 30|H 410 400 24 300 44|H 500 360 50 50 12|H 600 430 40 70 12
`;

const ARMS = [180, -22.5, 22.5, -67.5, 67.5];
const STARS = [[1351, 1504], [1272, 2445], [1059, 605], [1783, 665], [506, 1076], [2250, 1216]];

function makeRandom(seed) {
  let s = seed;
  return () => {
    s = (s * 1664525 + 1013904223) >>> 0;
    return s / 4294967296;
  };
}

function smooth(points, steps) {
  const out = [];
  for (let i = 0; i < points.length - 1; i++) {
    const p0 = points[i - 1] || points[i];
    const p1 = points[i];
    const p2 = points[i + 1];
    const p3 = points[i + 2] || p2;
    for (let k = 0; k < steps; k++) {
      const t = k / steps;
      const f = (a, b, c, d) =>
        0.5 * (2 * b + (c - a) * t + (2 * a - 5 * b + 4 * c - d) * t * t + (3 * b - a - 3 * c + d) * t * t * t);
      out.push([f(p0[0], p1[0], p2[0], p3[0]), f(p0[1], p1[1], p2[1], p3[1])]);
    }
  }
  out.push(points[points.length - 1]);
  return out;
}

function resample(curve, gap) {
  const out = [curve[0]];
  let left = gap;
  for (let i = 1; i < curve.length; i++) {
    let [x, y] = curve[i - 1];
    const [ex, ey] = curve[i];
    let d = Math.hypot(ex - x, ey - y);
    while (d >= left) {
      x += ((ex - x) * left) / d;
      y += ((ey - y) * left) / d;
      d = Math.hypot(ex - x, ey - y);
      out.push([x, y]);
      left = gap;
    }
    left -= d;
  }
  return out;
}

const line = (pts) => "M" + pts.map(([x, y]) => `${x.toFixed(1)} ${y.toFixed(1)}`).join("L");
const rings = (pts) => pts.map(([x, y]) => `M${(x - 11).toFixed(1)} ${y.toFixed(1)}a11 11 0 1 0 22 0a11 11 0 1 0-22 0`).join("");

function place(frame, nums) {
  const [ox, oy, sx, sy] = FRAMES[frame];
  const pts = [];
  for (let i = 0; i + 1 < nums.length; i += 2) pts.push([ox + nums[i] / sx, oy + nums[i + 1] / sy]);
  return pts;
}

function buildPlot() {
  const rnd = makeRandom(20231);
  const markers = [];
  const trails = [];

  const wander = (cx, cy, rx, ry, turns) => {
    const pts = [];
    for (let i = 0; i < turns; i++) {
      const a = rnd() * Math.PI * 2;
      const r = Math.pow(rnd(), 0.6);
      pts.push([cx + Math.cos(a) * r * rx, cy + Math.sin(a) * r * ry]);
    }
    return pts;
  };
  const wobble = (pts, amount) => pts.map(([x, y]) => [x + (rnd() - 0.5) * amount, y + (rnd() - 0.5) * amount]);

  SERIES.trim().split("\n").forEach((row) => {
    const [frame, colour] = row.split(" ");
    const [ox, oy, sx, sy] = FRAMES[frame];
    if (row.includes("@")) {
      const [cx, cy, rx, ry, count, turns] = row.split("@")[1].trim().split(/\s+/).map(Number);
      const [x, y, w, h] = [ox + cx / sx, oy + cy / sy, rx / sx, ry / sy];
      markers.push({ colour, d: rings(wander(x, y, w, h, count)) });
      if (turns > 2) trails.push(line(smooth(wander(x, y, w, h, turns), 5)));
    } else {
      const gap = Number(row.split(" ")[2]);
      const pts = place(frame, row.split("|")[1].trim().split(/\s+/).map(Number));
      const curve = smooth(pts, 14);
      /* slow walking packs the markers into a wide band */
      const spread = gap < 4 ? 13 : gap < 5 ? 10 : gap < 7 ? 6 : 2;
      const step = gap < 5 ? 2 : gap;
      markers.push({ colour, d: rings(wobble(resample(curve, step), spread)) });
      if (gap < 100) trails.push(line(wobble(resample(curve, 9), 2)));
    }
  });

  SCRIBBLES.trim().split("\n").forEach((row) => {
    const [frame, rest] = row.split(" | ");
    const nums = rest.trim().split(/\s+/).map(Number);
    trails.push(line(wobble(resample(smooth(place(frame, nums), 10), 7), 2)));
  });

  KNOTS.trim().split(/[\n|]/).forEach((item) => {
    const [frame, ...rest] = item.trim().split(" ");
    const [cx, cy, rx, ry, turns] = rest.map(Number);
    const [ox, oy, sx, sy] = FRAMES[frame];
    trails.push(line(smooth(wander(ox + cx / sx, oy + cy / sy, rx / sx, ry / sy, turns), 4)));
  });

  /* repeated runs up and down the lower arm */
  for (let i = 0; i < 18; i++) {
    const base = i % 2 ? 1300 + rnd() * 26 : 1368 + rnd() * 42;
    const pts = [[1320 + rnd() * 70, 1480 + rnd() * 60]];
    for (let y = 1620; y < 2460; y += 70) pts.push([base + (rnd() - 0.5) * 26, y + rnd() * 30]);
    pts.push([1300 + rnd() * 70, 2440]);
    trails.push(line(wobble(resample(smooth(pts, 10), 9), 2)));
  }
  /* runs between the hub and the side arms */
  const gates = [[1050, 1370], [1180, 1230], [1270, 1200], [1480, 1240], [1530, 1250], [1590, 1420], [1660, 1450], [1180, 1500], [1350, 1600], [1120, 1420], [1520, 1500]];
  for (let i = 0; i < 18; i++) {
    const a = gates[i % gates.length];
    const b = gates[Math.floor(rnd() * gates.length)];
    const mid = [1350 + (rnd() - 0.5) * 160, 1450 + (rnd() - 0.5) * 160];
    trails.push(line(wobble(resample(smooth([a, mid, b], 12), 10), 3)));
  }
  return { markers, trails };
}

const PLOT = buildPlot();

function star([x, y]) {
  return `M${x - 13} ${y}h26M${x} ${y - 13}v26M${x - 10} ${y - 10}l20 20M${x + 10} ${y - 10}l-20 20`;
}

function Figure() {
  return (
    <Plot viewBox="236 370 2260 2291" role="img" aria-label="Radial maze trajectories">
      <g fill="none" stroke="#444444" strokeWidth="2">
        {ARMS.map((angle) => (
          <g key={angle} transform={`translate(1350 1505) rotate(${angle})`}>
            <path d="M-77 -100V-943H77V-100M-63 -100V-943M63 -100V-943" />
          </g>
        ))}
      </g>
      <g fill="none" strokeWidth="3">
        {PLOT.markers.map((m, i) => (
          <path key={i} d={m.d} stroke={COLOURS[m.colour]} />
        ))}
      </g>
      <circle cx="1352" cy="1505" r="800" fill="none" stroke="#2080c4" strokeWidth="2" />
      <g fill="none" stroke="#d95319" strokeWidth="2" strokeLinejoin="round">
        {PLOT.trails.map((d, i) => (
          <path key={i} d={d} />
        ))}
      </g>
      <path d={STARS.map(star).join("")} fill="none" stroke="#ff0000" strokeWidth="4" />
    </Plot>
  );
}

/* ---------- page ---------- */

const MENUS = ["文件", "编辑", "查看", "插入", "工具", "桌面", "窗口", "帮助"];

const Tool = ({ label, on, children }) => (
  <ToolButton type="button" aria-label={label} aria-pressed={on} $on={on}>
    {children}
  </ToolButton>
);

export default function App() {
  return (
    <>
      <GlobalStyle />
      <Window>
        <TitleBar>
          <Lights>
            <Light type="button" aria-label="Close" />
            <Light type="button" aria-label="Minimize" />
            <Light type="button" aria-label="Zoom" />
          </Lights>
          <Title>Figure 1</Title>
        </TitleBar>
        <MenuBar>
          <Menus>
            {MENUS.map((m) => (
              <MenuButton type="button" key={m}>{m}</MenuButton>
            ))}
          </Menus>
          <MenuRest>
            <button type="button" aria-label="Dock figure"><PixelIcon name="undock" /></button>
          </MenuRest>
        </MenuBar>
        <ToolBar role="toolbar">
          <ToolGroup>
            <Tool label="New"><PixelIcon name="newFigure" /></Tool>
            <Tool label="Open"><PixelIcon name="open" /></Tool>
            <Tool label="Save"><PixelIcon name="save" /></Tool>
            <Tool label="Print"><PixelIcon name="print" /></Tool>
          </ToolGroup>
          <Tool label="Edit plot"><PixelIcon name="pointer" /></Tool>
          <ToolGroup>
            <Tool label="Zoom in"><PixelIcon name="zoomIn" /></Tool>
            <Tool label="Zoom out"><PixelIcon name="zoomOut" /></Tool>
            <Tool label="Pan"><PixelIcon name="pan" /></Tool>
            <Tool label="Rotate 3D"><RotateIcon /></Tool>
            <Tool label="Data cursor"><RectIcon rects={TIP} /></Tool>
            <BrushTool>
              <Tool label="Brush" on><BrushIcon /></Tool>
              <DropButton type="button" aria-label="Brush colour">
                <svg width="20" height="12" viewBox="0 0 20 12" aria-hidden="true"><path d="M0 0H20L12 12H8Z" fill="#484848" /></svg>
              </DropButton>
            </BrushTool>
          </ToolGroup>
          <Tool label="Link plot"><LinkIcon /></Tool>
          <ToolGroup>
            <Tool label="Insert colorbar"><RectIcon rects={COLORBAR} /></Tool>
            <Tool label="Insert legend"><RectIcon rects={LEGEND} /></Tool>
          </ToolGroup>
          <ToolGroup>
            <Tool label="Hide plot tools"><RectIcon rects={HIDE} /></Tool>
            <Tool label="Show plot tools"><RectIcon rects={DOCK} /></Tool>
          </ToolGroup>
        </ToolBar>
        <Canvas>
          <Figure />
        </Canvas>
      </Window>
    </>
  );
}
